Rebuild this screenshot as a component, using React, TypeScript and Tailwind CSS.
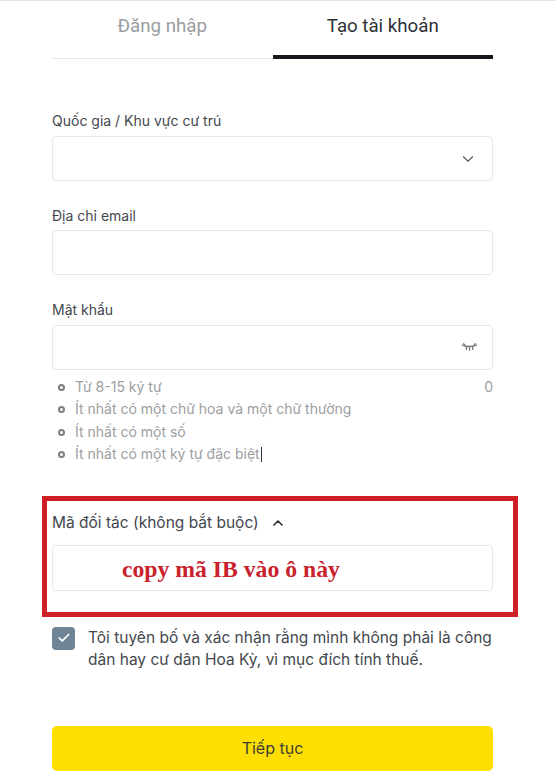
import { ChevronDown, ChevronUp, Check } from "lucide-react";

const hints = [
  "Từ 8-15 ký tự",
  "Ít nhất có một chữ hoa và một chữ thường",
  "Ít nhất có một số",
  "Ít nhất có một ký tự đặc biệt",
];

function EyeClosed() {
  return (
    <svg width="17" height="11" viewBox="0 0 18 11" fill="none" stroke="#6b7075" strokeWidth="1.3">
      <path d="M1 2.5 C5 5 13 5 17 2.5" />
      <path d="M2.5 1 L4.5 3.6 M6 4.2 L5.5 8 M9 4.6 V9 M12 4.2 L12.5 8 M15.5 1 L13.5 3.6" />
    </svg>
  );
}

function Field({
  label,
  children,
  className,
  inputClass,
}: {
  label: string;
  children?: React.ReactNode;
  className?: string;
  inputClass?: string;
}) {
  return (
    <div className={className}>
      <div className="h-[20px] text-[14px] leading-[20px] text-[#43484d]">{label}</div>
      <div className={`${inputClass} flex h-[45px] items-center justify-end rounded-[4px] border border-[#e4e6e8] bg-white pr-[14px]`}>
        {children}
      </div>
    </div>
  );
}

export default function App() {
  return (
    <div className="relative h-[782px] w-[556px] overflow-hidden border-t border-[#e3e3e3] bg-white font-['Inter','Noto_Sans',sans-serif]">
      <div className="px-[52px] pr-[63px]">
        <div className="flex h-[58px] border-b border-[#e8e9ea] font-['Roboto',sans-serif] text-[18.7px]">
          <div className="flex-1 pt-[12px] text-center leading-[26px] text-[#9a9da0]">Đăng nhập</div>
          <div className="-mb-px flex-1 border-b-[4px] border-[#15191e] pt-[12px] text-center leading-[26px] text-[#2e3338]">
            Tạo tài khoản
          </div>
        </div>

        <Field label="Quốc gia / Khu vực cư trú" className="mt-[52px]" inputClass="mt-[5px]">
          <ChevronDown size={18} strokeWidth={1.6} className="mr-[1px] text-[#5f6468]" />
        </Field>
        <Field label="Địa chỉ email" className="mt-[25px]" inputClass="mt-[4px]" />
        <Field label="Mật khẩu" className="mt-[25px]" inputClass="mt-[5px]">
          <EyeClosed />
        </Field>

        <div className="mt-[6px] text-[14px] leading-[22.4px] text-[#9b9ea1]">
          {hints.map((hint, i) => (
            <div key={hint} className="flex items-center">
              <span className="ml-[6px] mr-[10px] size-[7px] rounded-full border-2 border-[#7b7f82]" />
              <span className="flex-1">
                {hint}
                {i === 3 && <span className="ml-px inline-block h-[15px] w-px bg-[#2e3338] align-[-3px]" />}
              </span>
              {i === 0 && <span>0</span>}
            </div>
          ))}
        </div>

        <div className="mt-[47px] flex h-[20px] items-center gap-[12px] text-[15.5px] text-[#43484d]">
          Mã đối tác (không bắt buộc)
          <ChevronUp size={16} strokeWidth={2.5} className="-ml-[1px] text-[#2e3338]" />
        </div>
        <div className="relative mt-[12px] h-[46px] rounded-[4px] border border-[#e4e6e8] bg-white">
          <span className="absolute left-[69px] top-[10px] whitespace-nowrap font-['Liberation_Serif',serif] text-[23.7px] leading-[26px] font-bold text-[#c8222d]">
            copy mã IB vào ô này
          </span>
        </div>

        <div className="mt-[35px] flex gap-[13px]">
          <span className="mt-[1px] flex size-[23px] shrink-0 items-center justify-center rounded-[4px] bg-[#6d8596]">
            <Check size={14} strokeWidth={3} className="text-white" />
          </span>
          <p className="pt-[1px] text-[15.5px] leading-[22px] whitespace-nowrap text-[#43484d]">
            Tôi tuyên bố và xác nhận rằng mình không phải là công
            <br />
            dân hay cư dân Hoa Kỳ, vì mục đích tính thuế.
          </p>
        </div>

        <div className="mt-[55px] flex h-[45px] items-center justify-center rounded-[5px] bg-[#ffde02] pb-[1px] text-[16px] text-[#3d3f33]">
          Tiếp tục
        </div>
      </div>

      <div className="absolute left-[42px] top-[495px] h-[121px] w-[476px] border-[5px] border-[#cf2027]" />
    </div>
  );
}
